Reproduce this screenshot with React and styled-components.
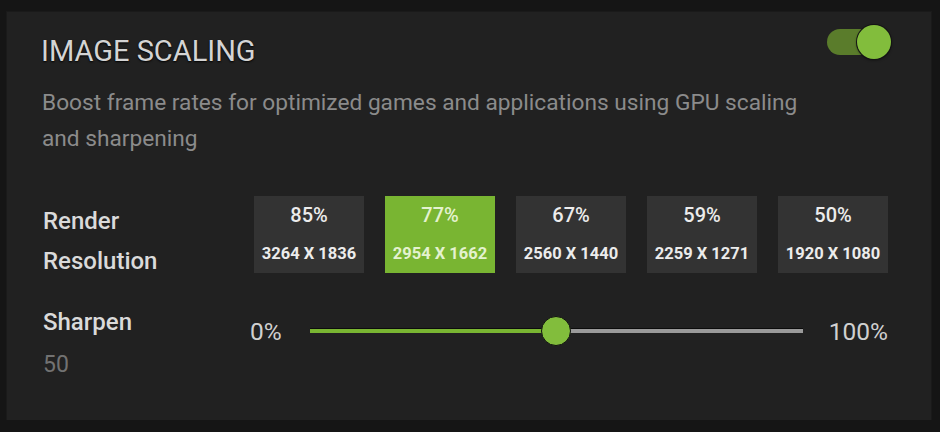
import React from "react";
import styled, { createGlobalStyle } from "styled-components";

const Global = createGlobalStyle`
  body {
    margin: 0;
    background: #151515;
    font-family: Roboto, "Liberation Sans", sans-serif;
  }
`;

const Panel = styled.div`
  box-sizing: border-box;
  width: 924px;
  height: 408px;
  margin: 12px 0 0 7px;
  padding: 13px 40px 0 34px;
  background: #212121;
  box-shadow: 0 0 0 1px #1a1a1a;
`;

const Header = styled.div`
  display: flex;
  justify-content: space-between;
  align-items: flex-start;
`;

const Title = styled.h1`
  margin: 9px 0 0 0;
  font-size: 29px;
  line-height: 34px;
  font-weight: 400;
  color: #d4d4d4;
  text-shadow: 0 1px 2px #000;
`;

const Toggle = styled.div`
  position: relative;
  width: 64px;
  height: 34px;
`;

const ToggleTrack = styled.div`
  position: absolute;
  left: 0;
  top: 4px;
  width: 56px;
  height: 26px;
  border-radius: 13px;
  background: #5a7c2b;
`;

const ToggleKnob = styled.div`
  position: absolute;
  right: 0;
  top: 0;
  width: 34px;
  height: 34px;
  border-radius: 50%;
  background: #82bd3c;
  box-shadow: 0 0 0 1px #141414, 0 1px 3px rgba(0, 0, 0, 0.6);
`;

const Description = styled.p`
  margin: 17px 0 0 1px;
  width: 790px;
  font-size: 22.7px;
  line-height: 36px;
  color: #8b8b8b;
`;

const Grid = styled.div`
  display: grid;
  grid-template-columns: 209px 1fr;
  margin-top: 39px;
`;

const Label = styled.div`
  margin: ${(p) => p.$top || 0}px 0 0 2px;
  font-size: 24px;
  line-height: 40px;
  font-weight: 500;
  color: #dadada;
`;

const Value = styled.div`
  margin: 8px 0 0 2px;
  font-size: 23px;
  line-height: 30px;
  color: #727272;
`;

const Options = styled.div`
  display: flex;
  gap: 21px;
  margin-left: 4px;
`;

const Option = styled.div`
  box-sizing: border-box;
  width: 110px;
  height: 77px;
  padding-top: 7px;
  display: flex;
  flex-direction: column;
  align-items: center;
  background: ${(p) => (p.$active ? "#79b532" : "#333333")};
  color: ${(p) => (p.$active ? "#e4f2cf" : "#ececec")};
`;

const Percent = styled.div`
  font-size: 20px;
  line-height: 24px;
  font-weight: 500;
`;

const Res = styled.div`
  margin-top: 17px;
  font-size: 16.5px;
  line-height: 20px;
  font-weight: 700;
  white-space: nowrap;
`;

const SliderRow = styled.div`
  display: flex;
  align-items: center;
  height: 40px;
  margin-top: 30px;
`;

const SliderEnd = styled.div`
  font-size: 24.5px;
  color: #d0d0d0;
`;

const Track = styled.div`
  position: relative;
  width: 493px;
  height: 4px;
  margin: 0 26px 0 28px;
  background: #9a9a9a;
  box-shadow: 0 -1px 0 #0c0c0c;
`;

const Fill = styled.div`
  height: 100%;
  background: #79b532;
`;

const Thumb = styled.div`
  position: absolute;
  top: 50%;
  width: 28px;
  height: 28px;
  margin: -15px 0 0 -15px;
  border-radius: 50%;
  background: #82bd3c;
  border: 1px solid #111;
`;

const options = [
  { pct: "85%", res: "3264 X 1836" },
  { pct: "77%", res: "2954 X 1662", active: true },
  { pct: "67%", res: "2560 X 1440" },
  { pct: "59%", res: "2259 X 1271" },
  { pct: "50%", res: "1920 X 1080" },
];

export default function App() {
  const sharpen = 50;
  return (
    <>
      <Global />
      <Panel>
        <Header>
          <Title>IMAGE SCALING</Title>
          <Toggle>
            <ToggleTrack />
            <ToggleKnob />
          </Toggle>
        </Header>
        <Description>
          Boost frame rates for optimized games and applications using GPU
          scaling and sharpening
        </Description>
        <Grid>
          <Label $top={5}>
            Render
            <br />
            Resolution
          </Label>
          <Options>
            {options.map((o) => (
              <Option key={o.pct} $active={o.active}>
                <Percent>{o.pct}</Percent>
                <Res>{o.res}</Res>
              </Option>
            ))}
          </Options>
          <div>
            <Label $top={21}>Sharpen</Label>
            <Value>{sharpen}</Value>
          </div>
          <SliderRow>
            <SliderEnd>0%</SliderEnd>
            <Track>
              <Fill style={{ width: `${sharpen}%` }} />
              <Thumb style={{ left: `${sharpen}%` }} />
            </Track>
            <SliderEnd>100%</SliderEnd>
          </SliderRow>
        </Grid>
      </Panel>
    </>
  );
}
